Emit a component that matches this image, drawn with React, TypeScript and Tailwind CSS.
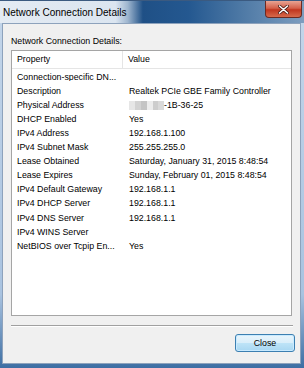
import React from "react";

const rows: [string, string][] = [
  ["Connection-specific DN...", ""],
  ["Description", "Realtek PCIe GBE Family Controller"],
  ["Physical Address", "__MAC__"],
  ["DHCP Enabled", "Yes"],
  ["IPv4 Address", "192.168.1.100"],
  ["IPv4 Subnet Mask", "255.255.255.0"],
  ["Lease Obtained", "Saturday, January 31, 2015 8:48:54"],
  ["Lease Expires", "Sunday, February 01, 2015 8:48:54"],
  ["IPv4 Default Gateway", "192.168.1.1"],
  ["IPv4 DHCP Server", "192.168.1.1"],
  ["IPv4 DNS Server", "192.168.1.1"],
  ["IPv4 WINS Server", ""],
  ["NetBIOS over Tcpip En...", "Yes"],
];

function Mac() {
  return (
    <span className="flex items-center">
      <span className="flex h-[9px] w-[35px]">
        <span className="w-[6px] bg-[#e6e6e6]" />
        <span className="w-[6px] bg-[#d2d2d2]" />
        <span className="w-[6px] bg-[#c4c4c4]" />
        <span className="w-[6px] bg-[#ececec]" />
        <span className="w-[5px] bg-[#cdcdcd]" />
        <span className="w-[6px] bg-[#d9d9d9]" />
      </span>
      <span>-1B-36-25</span>
    </span>
  );
}

export default function App() {
  return (
    <div
      className="w-[304px] h-[368px] flex flex-col overflow-hidden bg-[linear-gradient(to_bottom,#c4d6ea,#a9c3e0_80%,#3d6ea3)] text-black"
      style={{ fontFamily: '"Liberation Sans", Arial, sans-serif' }}
    >
      {/* Title bar */}
      <div className="relative h-[23px] shrink-0 flex items-center bg-[linear-gradient(to_right,#e4ebf3_0%,#dbe5f0_38%,#9fb6cf_42%,#1f5086_47%,#245890_62%,#4f7aa6_80%,#7d9dbf_100%)] border-t border-[#3b5a80]">
        <span className="pl-[3px] text-[10px] leading-none text-black pt-[1px]">Network Connection Details</span>
        <div className="absolute right-[2px] top-0 w-[37px] h-[17px] rounded-b-[4px] border border-t-0 border-[#6b2a22] bg-[linear-gradient(to_bottom,#e8a493_0%,#d4604a_45%,#c0361f_55%,#d66a4c_100%)] flex items-center justify-center">
          <svg width="11" height="9" viewBox="0 0 11 9">
            <path d="M1.5 1 L9.5 8 M9.5 1 L1.5 8" stroke="#4a1a14" strokeWidth="3" strokeLinecap="round" />
            <path d="M1.5 1 L9.5 8 M9.5 1 L1.5 8" stroke="#ffffff" strokeWidth="1.6" strokeLinecap="round" />
          </svg>
        </div>
      </div>

      {/* Client area */}
      <div className="flex-1 ml-[2px] mr-[3px] mb-[4px] border border-[#8da2bc] bg-[#f0f0f0] flex flex-col text-[8.8px] leading-none">
        <div className="pl-[8px] pt-[13px] h-[26px] shrink-0">Network Connection Details:</div>
        <div className="mx-[8px] h-[266px] shrink-0 border border-[#a5a5a5] bg-white flex flex-col overflow-hidden">
          <div className="flex h-[18px] shrink-0 border-b border-[#e5e5e5] items-center">
            <div className="w-[111px] h-full border-r border-[#e5e5e5] flex items-center pl-[5px]">Property</div>
            <div className="pl-[5px]">Value</div>
          </div>
          <div className="flex flex-col pt-[1px]">
            {rows.map(([k, v]) => (
              <div key={k} className="flex h-[14.1px] items-center">
                <div className="w-[112px] pl-[5px] whitespace-nowrap overflow-hidden">{k}</div>
                <div className="pl-[5px] whitespace-nowrap">{v === "__MAC__" ? <Mac /> : v}</div>
              </div>
            ))}
          </div>
        </div>
        <div className="mx-[8px] mt-[9px] mr-[7px] border-t border-[#a0a0a0] border-b-white border-b h-0" />
        <div className="flex justify-end pr-[5px] pt-[7px]">
          <button className="w-[60px] h-[18px] rounded-[3px] border border-[#3c7fb1] bg-[linear-gradient(to_bottom,#e9f5fc_0%,#d9eefa_48%,#bde3f7_52%,#a8d7f2_100%)] shadow-[inset_0_0_0_1px_#c8eaff] flex items-center justify-center text-[8.8px] text-black">
            Close
          </button>
        </div>
      </div>
    </div>
  );
}
